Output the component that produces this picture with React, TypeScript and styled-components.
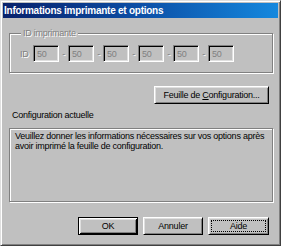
import React from 'react';
import styled, { createGlobalStyle, css } from 'styled-components';

const GlobalStyle = createGlobalStyle`
  html, body {
    margin: 0;
    padding: 0;
    background: #c0c0c0;
  }
  body {
    font-family: "Liberation Sans", Arial, sans-serif;
    font-size: 9px;
  }
`;

const Window = styled.div`
  box-sizing: border-box;
  width: 281px;
  height: 246px;
  background: #c0c0c0;
  border: 1px solid;
  border-color: #dfdfdf #404040 #404040 #dfdfdf;
  box-shadow: inset 1px 1px 0 #fff, inset -1px -1px 0 #808080;
  padding: 2px;
  display: flex;
  flex-direction: column;
`;

const TitleBar = styled.div`
  height: 15px;
  flex-shrink: 0;
  display: flex;
  align-items: center;
  padding-left: 1px;
  background: linear-gradient(90deg, #08216b 0%, #0c4fa6 50%, #1588de 100%);
  color: #fff;
  font-weight: bold;
  font-size: 10px;
  letter-spacing: -0.25px;
  white-space: nowrap;
`;

const Body = styled.div`
  flex: 1;
  display: flex;
  flex-direction: column;
  padding: 0 5px 0 6px;
  letter-spacing: -0.25px;
`;

const etched = css`
  border: 1px solid #808080;
  box-shadow: inset 1px 1px 0 #fff, 1px 1px 0 #fff;
`;

const GroupBox = styled.fieldset`
  ${etched};
  margin: 9px 0 0;
  padding: 6px 0 10px 10px;
  min-inline-size: 0;
`;

const Legend = styled.legend`
  margin-left: 1px;
  padding: 0 2px;
  line-height: 12px;
  background: #c0c0c0;
`;

const Disabled = styled.span`
  color: #808080;
  text-shadow: 1px 1px 0 #fff;
`;

const IdRow = styled.div`
  display: flex;
  align-items: center;
  height: 17px;
`;

const IdLabel = styled(Disabled)`
  width: 13px;
`;

const Sep = styled(Disabled)`
  width: 9px;
  text-align: center;
`;

const IdField = styled.div`
  box-sizing: border-box;
  width: 26px;
  height: 17px;
  border: 1px solid;
  border-color: #808080 #fff #fff #808080;
  box-shadow: inset 1px 1px 0 #000, inset -1px -1px 0 #dfdfdf;
  padding: 1px 0 0 3px;
  color: #808080;
  line-height: 14px;
`;

const ButtonRow = styled.div<{ $top: number }>`
  display: flex;
  justify-content: flex-end;
  gap: 5px;
  margin-top: ${p => p.$top}px;
  padding-right: 4px;
`;

const Button = styled.button<{ $width: number; $default?: boolean }>`
  box-sizing: border-box;
  width: ${p => p.$width}px;
  height: 18px;
  padding: 2px;
  margin: 0;
  display: flex;
  background: #c0c0c0;
  font: inherit;
  letter-spacing: inherit;
  color: #000;
  border: 1px solid;
  border-color: #fff #000 #000 #fff;
  box-shadow: inset 1px 1px 0 #dfdfdf, inset -1px -1px 0 #808080;
  ${p =>
    p.$default &&
    css`
      border: 1px solid #000;
      box-shadow: inset 1px 1px 0 #fff, inset -1px -1px 0 #000,
        inset 2px 2px 0 #dfdfdf, inset -2px -2px 0 #808080;
    `}
`;

const ButtonLabel = styled.span<{ $focused?: boolean }>`
  flex: 1;
  display: flex;
  align-items: center;
  justify-content: center;
  border: 1px dotted ${p => (p.$focused ? '#000' : 'transparent')};
  line-height: 10px;
`;

const Accel = styled.span`
  text-decoration: underline;
`;

const SectionLabel = styled.div`
  margin-top: 5px;
  padding-left: 3px;
  line-height: 12px;
`;

const InfoBox = styled.div`
  ${etched};
  box-sizing: border-box;
  height: 74px;
  margin-top: 7px;
  padding: 2px 5px;
  line-height: 10px;
`;

export default function App() {
  const ids = ['50', '50', '50', '50', '50', '50'];

  return (
    <>
      <GlobalStyle />
      <Window>
        <TitleBar>Informations imprimante et options</TitleBar>
        <Body>
          <GroupBox>
            <Legend>
              <Disabled>ID imprimante</Disabled>
            </Legend>
            <IdRow>
              <IdLabel>ID</IdLabel>
              {ids.map((v, i) => (
                <React.Fragment key={i}>
                  {i > 0 && <Sep>-</Sep>}
                  <IdField>{v}</IdField>
                </React.Fragment>
              ))}
            </IdRow>
          </GroupBox>

          <ButtonRow $top={13}>
            <Button $width={115}>
              <ButtonLabel>
                Feuille de&nbsp;<Accel>C</Accel>onfiguration...
              </ButtonLabel>
            </Button>
          </ButtonRow>

          <SectionLabel>Configuration actuelle</SectionLabel>

          <InfoBox>
            Veuillez donner les informations nécessaires sur vos options après
            avoir imprimé la feuille de configuration.
          </InfoBox>

          <ButtonRow $top={15}>
            <Button $width={60} $default>
              <ButtonLabel>OK</ButtonLabel>
            </Button>
            <Button $width={60}>
              <ButtonLabel>Annuler</ButtonLabel>
            </Button>
            <Button $width={61}>
              <ButtonLabel $focused>Aide</ButtonLabel>
            </Button>
          </ButtonRow>
        </Body>
      </Window>
    </>
  );
}
